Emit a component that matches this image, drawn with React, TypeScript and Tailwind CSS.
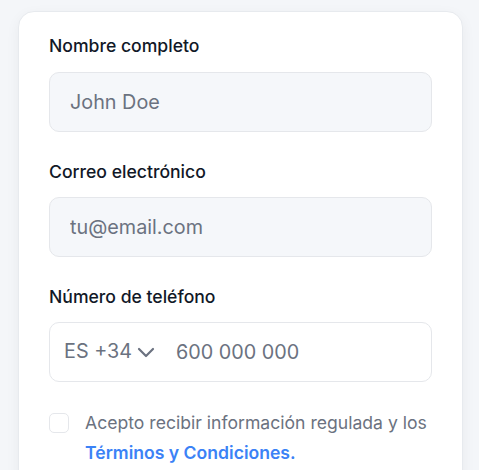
import React from 'react';

export default function App() {
    return (
        <div className="min-h-[470px] bg-[#f4f6f9] pl-[18px] pt-[11px] font-['Inter',sans-serif]">
            <div className="w-[445px] rounded-t-[16px] border border-[#e7eaee] bg-white px-[30px] pt-[22px] pb-6 shadow-[0_4px_14px_rgba(15,23,42,0.05)]">
                <div className="flex flex-col">
                    <label className="text-[17.6px] leading-6 font-medium text-[#111827]">Nombre completo</label>
                    <input
                        placeholder="John Doe"
                        className="mt-[14px] h-[60px] w-full rounded-[10px] border border-[#e5e7eb] bg-[#f5f7fa] px-5 text-[19.8px] text-[#111827] outline-none placeholder:text-[#6b7280]"
                    />
                </div>

                <div className="mt-[28px] flex flex-col">
                    <label className="text-[17.6px] leading-6 font-medium text-[#111827]">Correo electrónico</label>
                    <input
                        placeholder="tu@email.com"
                        className="mt-[13px] h-[60px] w-full rounded-[10px] border border-[#e5e7eb] bg-[#f5f7fa] px-5 text-[19.8px] text-[#111827] outline-none placeholder:text-[#6b7280]"
                    />
                </div>

                <div className="mt-[28px] flex flex-col">
                    <label className="text-[17.6px] leading-6 font-medium text-[#111827]">Número de teléfono</label>
                    <div className="mt-[13px] flex h-[60px] w-full items-center rounded-[10px] border border-[#e5e7eb] bg-white pl-[14px]">
                        <button className="flex shrink-0 items-center gap-[2px] whitespace-nowrap text-[19.8px] text-[#6b7280]">
                            ES +34
                            <svg className="h-6 w-6" fill="none" stroke="currentColor" viewBox="0 0 24 24">
                                <path strokeLinecap="round" strokeLinejoin="round" strokeWidth="2.2" d="M5 9l7 7 7-7" />
                            </svg>
                        </button>
                        <input
                            placeholder="600 000 000"
                            className="ml-[18px] h-full min-w-0 flex-1 bg-transparent text-[19.8px] text-[#111827] outline-none placeholder:text-[#6b7280]"
                        />
                    </div>
                </div>

                <div className="mt-[26px] flex items-start gap-4">
                    <input
                        type="checkbox"
                        className="mt-[5px] h-5 w-5 shrink-0 appearance-none rounded-[5px] border border-[#e5e7eb] bg-white"
                    />
                    <p className="text-[17.6px] leading-[30px] text-[#6b7280]">
                        Acepto recibir información regulada y los{' '}
                        <a className="font-semibold text-[#3b82f6]">Términos y Condiciones.</a>
                    </p>
                </div>
            </div>
        </div>
    );
}
